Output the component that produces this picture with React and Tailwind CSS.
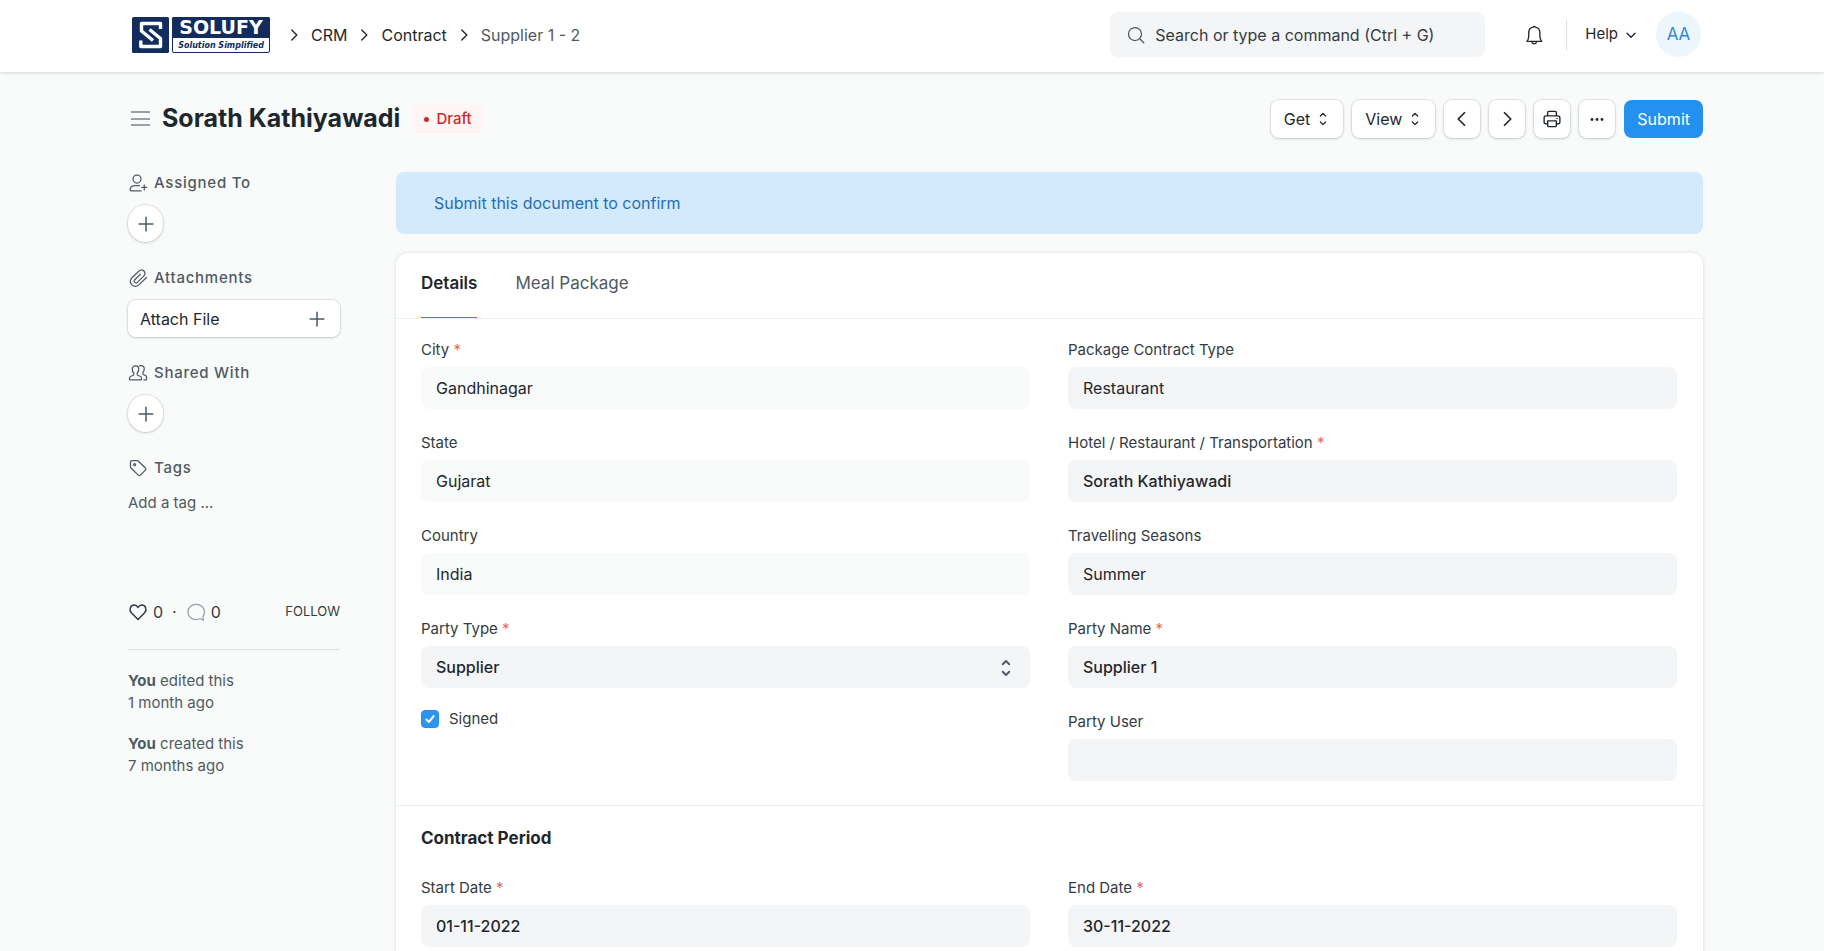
import React, { useState } from "react";

const cardShadow = "shadow-[0_0_4px_rgba(25,39,52,0.12),0_1px_2px_rgba(25,39,52,0.08)]";
const btnShadow = "shadow-[0_0_1px_1px_rgba(25,39,52,0.1),0_1px_3px_rgba(25,39,52,0.14)]";

function Icon({ size = 20, color = "currentColor", width = 1, className = "", children }) {
  return (
    <svg
      width={size}
      height={size}
      viewBox="0 0 16 16"
      fill="none"
      stroke={color}
      strokeWidth={width}
      strokeLinecap="round"
      strokeLinejoin="round"
      className={`shrink-0 ${className}`}
      aria-hidden="true"
    >
      {children}
    </svg>
  );
}

const ChevronRight = (props) => (
  <Icon {...props}>
    <path d="M6 3.5 10.5 8 6 12.5" />
  </Icon>
);

const SelectIcon = (props) => (
  <Icon {...props}>
    <path d="M5.400 5 8 2.400 10.600 5M5.400 11 8 13.600 10.600 11" />
  </Icon>
);

const PlusIcon = (props) => (
  <Icon {...props}>
    <path d="M8 2.5v11M2.5 8h11" />
  </Icon>
);

function Logo() {
  return (
    <svg width="138" height="36" viewBox="0 0 138 36" aria-label="Solufy">
      <rect width="37" height="36" rx="1.5" fill="#122c5e" />
      <path
        d="M28.5 12V6.5H9.5V14L21 23.5M8.8 23.500V29.500H28.500V21.500L17.500 12.500"
        fill="none"
        stroke="#fff"
        strokeWidth="3.4"
        strokeLinejoin="round"
      />
      <rect x="40.5" y="0.5" width="97" height="35" rx="1.5" fill="#fff" stroke="#122c5e" />
      <path d="M40 1.5A1.5 1.5 0 0 1 41.500 0H136.500A1.500 1.500 0 0 1 138 1.500V21H40Z" fill="#122c5e" />
      <text
        x="89"
        y="17"
        textAnchor="middle"
        fill="#fff"
        fontFamily="DejaVu Sans, sans-serif"
        fontSize="19"
        fontWeight="700"
      >
        SOLUFY
      </text>
      <text
        x="89"
        y="31"
        textAnchor="middle"
        fill="#122c5e"
        fontFamily="DejaVu Sans, sans-serif"
        fontSize="8"
        fontWeight="700"
        fontStyle="italic"
      >
        Solution Simplified
      </text>
    </svg>
  );
}

function Navbar() {
  return (
    <header className="bg-white shadow-[0_1px_3px_rgba(25,39,52,0.18)]">
      <div className="mx-auto flex h-[72px] max-w-[1600px] items-center pl-5 pr-[11px] pb-[3px]">
        <a href="#home">
          <Logo />
        </a>
        <nav className="ml-[15px] flex items-center gap-2 text-base">
          <ChevronRight size={18} width={1.2} />
          <a href="#crm">CRM</a>
          <ChevronRight size={18} width={1.2} />
          <a href="#contract">Contract</a>
          <ChevronRight size={18} width={1.2} />
          <a href="#supplier" className="text-[#505a62]">
            Supplier 1 - 2
          </a>
        </nav>
        <div className="ml-auto flex h-[45px] w-[375px] items-center rounded-lg bg-[#f4f5f6] pl-4">
          <Icon size={20} color="#4c5a67">
            <circle cx="7.2" cy="7.2" r="5.2" />
            <path d="m11.2 11.2 3 3" />
          </Icon>
          <input
            aria-label="Search"
            placeholder="Search or type a command (Ctrl + G)"
            className="ml-[9px] min-w-0 flex-1 bg-transparent text-base outline-none placeholder:text-[#333c44]"
          />
        </div>
        <button aria-label="Notifications" className="ml-[37px]">
          <Icon size={24} width={0.9}>
            <path d="M3.300 12.200h9.900c-.8-1-1.300-1.900-1.300-3.600V6.400A3.700 3.700 0 0 0 8.900 2.800a.8.800 0 0 0-1.500 0A3.700 3.700 0 0 0 4.500 6.400v2.200c0 1.700-.4 2.600-1.200 3.600ZM6.500 12.400c.2.900.8 1.400 1.600 1.400s1.500-.5 1.700-1.400" />
          </Icon>
        </button>
        <div className="ml-5 h-[30px] w-px bg-[#dce0e3]" />
        <button className="ml-[18px] flex items-center gap-[5px] text-[15px]">
          Help
          <Icon size={16} width={1.4}>
            <path d="M4 6.200 8 10.200l4-4" />
          </Icon>
        </button>
        <div className="ml-[17px] flex size-[45px] items-center justify-center rounded-full bg-[#edf6fd] text-[17px] text-[#318ad8]">
          AA
        </div>
      </div>
    </header>
  );
}

function ToolButton({ label, children }) {
  return (
    <button
      aria-label={label}
      className={`flex h-[38px] min-w-9 items-center justify-center gap-[5px] rounded-lg bg-white text-base ${btnShadow}`}
    >
      {children}
    </button>
  );
}

function PageHead() {
  return (
    <div className="flex h-[38px] items-center">
      <button aria-label="Toggle sidebar">
        <svg width="24" height="24" viewBox="0 0 24 24" stroke="#98a1a9" strokeWidth="2" aria-hidden="true">
          <path d="M3 5h19M3 12h19M3 18h19" />
        </svg>
      </button>
      <h1 className="ml-[10px] pb-[2px] text-[25px] font-bold leading-8">Sorath Kathiyawadi</h1>
      <span className="ml-3 flex h-[30px] items-center gap-[7px] rounded-lg bg-[#fff5f5] px-3 text-[15px] font-medium text-[#cb2929]">
        <i className="size-[5px] rounded-full bg-[#cb2929]" />
        Draft
      </span>
      <div className="ml-auto flex items-center gap-[9px]">
        <ToolButton>
          <span className="pl-[13px]">Get</span>
          <SelectIcon size={16} width={1.3} className="mr-3" />
        </ToolButton>
        <ToolButton>
          <span className="pl-[13px]">View</span>
          <SelectIcon size={16} width={1.3} className="mr-3" />
        </ToolButton>
        <ToolButton label="Previous">
          <Icon size={20} width={1.4}>
            <path d="M10 3 5 8l5 5" />
          </Icon>
        </ToolButton>
        <ToolButton label="Next">
          <Icon size={20} width={1.4}>
            <path d="m6 3 5 5-5 5" />
          </Icon>
        </ToolButton>
        <ToolButton label="Print">
          <Icon size={20} width={1.1}>
            <path d="M4.500 5.500V2.800c0-.6.300-.9.900-.9h5.200c.6 0 .9.300.9.900v2.700M4.500 11.800H3a1.300 1.300 0 0 1-1.300-1.300V7A1.500 1.500 0 0 1 3.200 5.500h9.600A1.500 1.500 0 0 1 14.300 7v3.500a1.300 1.300 0 0 1-1.300 1.300h-1.500" />
            <path d="M4.500 9.500h7v3.700a.9.900 0 0 1-.9.900H5.400a.9.900 0 0 1-.9-.9Z" />
            <path d="M12 7.500h.1" />
          </Icon>
        </ToolButton>
        <ToolButton label="Menu">
          <svg width="16" height="16" viewBox="0 0 16 16" fill="currentColor" aria-hidden="true">
            <circle cx="3" cy="8.5" r="1.4" />
            <circle cx="8" cy="8.5" r="1.4" />
            <circle cx="13" cy="8.5" r="1.4" />
          </svg>
        </ToolButton>
        <button className="h-[38px] rounded-lg bg-[#2490ef] px-[13px] text-base text-white">Submit</button>
      </div>
    </div>
  );
}

function SideLabel({ icon, children }) {
  return (
    <div className="flex h-[22px] items-center gap-[6px] text-[15px] font-medium tracking-wider text-[#505a62]">
      {icon}
      {children}
    </div>
  );
}

function RoundAdd({ label }) {
  return (
    <button
      aria-label={label}
      className={`mt-[11px] flex h-[37px] w-[35px] items-center justify-center rounded-full bg-white text-[#4c5a67] ${btnShadow}`}
    >
      <PlusIcon size={20} width={1.2} />
    </button>
  );
}

function Sidebar() {
  return (
    <aside className="w-[212px] shrink-0 text-[15px] text-[#505a62]">
      <SideLabel
        icon={
          <Icon>
            <circle cx="7.2" cy="4.8" r="3.2" />
            <path d="M9.200 10H5.500C3.200 10 1.700 11.500 1.700 13.300c0 .6.300.9.900.9h7.900M13 9.500v4M11 11.500h4" />
          </Icon>
        }
      >
        Assigned To
      </SideLabel>
      <RoundAdd label="Assign" />
      <div className="h-[25px]" />
      <SideLabel
        icon={
          <Icon>
            <path d="m14.800 7.600-5.700 5.500c-2 1.900-4.400 2-6 .4s-1.600-4 .3-5.900l5-4.800c1.500-1.500 3.200-1.500 4.300-.4 1.200 1.200 1.200 2.900-.3 4.300l-4.700 4.600c-.8.800-1.700.8-2.300.2-.6-.6-.6-1.500.2-2.300L9.900 5" />
          </Icon>
        }
      >
        Attachments
      </SideLabel>
      <button
        className={`mt-[11px] flex h-[37px] w-full items-center justify-between rounded-lg bg-white pl-3 pr-[13px] text-base text-[#1f272e] ${btnShadow}`}
      >
        Attach File
        <PlusIcon size={20} width={1.2} color="#4c5a67" />
      </button>
      <div className="h-[25px]" />
      <SideLabel
        icon={
          <Icon>
            <path d="M6 2.300c1.700 0 2.600 1.200 2.600 2.700 0 1.300-.5 2.300-1.200 3v1.100c0 .5.200.7.700.9l1.600.6c.7.300 1.100.8 1.100 1.600v.7c0 .3-.2.500-.5.500H1.700c-.3 0-.5-.2-.5-.5v-.7c0-.8.400-1.300 1.100-1.600l1.600-.6c.5-.2.700-.4.700-.9V8c-.7-.7-1.200-1.700-1.200-3C3.400 3.500 4.300 2.300 6 2.300ZM9.300 2.300c.4-.2.800-.3 1.200-.3 1.600 0 2.500 1.200 2.500 2.700 0 1.200-.4 2.200-1.100 2.900v.9c0 .5.200.7.700.9l1.200.5c.7.300 1.100.8 1.100 1.600v1.400c0 .3-.2.500-.5.500h-1.700" />
          </Icon>
        }
      >
        Shared With
      </SideLabel>
      <RoundAdd label="Share" />
      <div className="h-[25px]" />
      <SideLabel
        icon={
          <Icon>
            <path d="M2 3v4c0 .4.100.7.400 1l5.800 5.700c.5.500 1.200.5 1.700 0l4-4c.5-.5.500-1.200 0-1.700L8.100 2.400c-.3-.3-.6-.4-1-.4H3a1 1 0 0 0-1 1Z" />
            <circle cx="5.3" cy="5.3" r=".8" />
          </Icon>
        }
      >
        Tags
      </SideLabel>
      <button className="mt-[14px] block h-5 leading-5">Add a tag ...</button>

      <div className="mt-[87px] flex h-6 items-center text-base text-[#333c44]">
        <button className="flex items-center gap-[5px]">
          <Icon size={20} width={1.2}>
            <path d="M8 14 2.700 8.600C.5 6 2 2.400 4.900 2.400c1.400 0 2.400.7 3.100 1.900.7-1.200 1.700-1.900 3.100-1.900 2.900 0 4.400 3.600 2.200 6.200Z" />
          </Icon>
          0
        </button>
        <span className="mx-[9px]">·</span>
        <button className="flex items-center gap-[5px]">
          <Icon size={20} color="#98a1a9">
            <path d="M14 14.600 11.300 13.400c-1 .4-2 .6-3.100.6C4.500 14 1.500 11.600 1.500 8s3-6.200 6.700-6.200S14.800 4.400 14.800 8c0 1.400-.5 2.600-1.300 3.600Z" />
          </Icon>
          0
        </button>
        <button className="ml-auto text-[13px]">FOLLOW</button>
      </div>
      <hr className="mt-[25px] border-[#dce0e3]" />
      <p className="mt-5 leading-[22px]">
        <b>You</b> edited this
        <br />1 month ago
      </p>
      <p className="mt-[19px] leading-[22px]">
        <b>You</b> created this
        <br />7 months ago
      </p>
    </aside>
  );
}

function FieldLabel({ id, label, required }) {
  return (
    <label htmlFor={id} className="block h-5 text-[15px] leading-5 text-[#333c44]">
      {label}
      {required && <span className="text-[#e8695c]"> *</span>}
    </label>
  );
}

function Field({ id, label, value = "", required, readOnly, bold }) {
  const [text, setText] = useState(value);
  return (
    <div className="mb-6">
      <FieldLabel id={id} label={label} required={required} />
      <input
        id={id}
        value={text}
        readOnly={readOnly}
        onChange={(e) => setText(e.target.value)}
        className={`mt-[7px] block h-[42px] w-full rounded-lg px-[15px] text-base text-[#1f272e] outline-none ${
          readOnly ? "bg-[#f9fafa]" : "bg-[#f4f5f6]"
        } ${bold ? "font-medium" : ""}`}
      />
    </div>
  );
}

function ContractForm() {
  const [signed, setSigned] = useState(true);

  return (
    <section className={`mt-[19px] rounded-xl bg-white ${cardShadow}`}>
      <div className="flex h-[66px] gap-[38px] border-b border-[#ebeef0] px-[25px] text-[17px]">
        <button className="border-b border-[#2490ef] pb-[3px] font-semibold">Details</button>
        <button className="pb-1 text-[#505a62]">Meal Package</button>
      </div>
      <div className="grid grid-cols-2 gap-x-[38px] border-b border-[#ebeef0] pl-[25px] pr-[26px] pt-[21px]">
        <div>
          <Field id="city" label="City" value="Gandhinagar" required readOnly />
          <Field id="state" label="State" value="Gujarat" readOnly />
          <Field id="country" label="Country" value="India" readOnly />
          <FieldLabel id="party-type" label="Party Type" required />
          <div className="relative mt-[7px]">
            <select
              id="party-type"
              className="block h-[42px] w-full appearance-none rounded-lg bg-[#f4f5f6] px-[15px] text-base font-medium outline-none"
            >
              <option>Supplier</option>
            </select>
            <SelectIcon
              size={20}
              width={1.5}
              color="#4c5a67"
              className="pointer-events-none absolute right-[14px] top-3"
            />
          </div>
          <label className="mt-5 flex items-center gap-[10px] text-[15px] text-[#333c44]">
            <span className="relative flex">
              <input
                type="checkbox"
                checked={signed}
                onChange={(e) => setSigned(e.target.checked)}
                className="size-[18px] appearance-none rounded border border-[#c0c6cc] checked:border-[#2490ef] checked:bg-[#2d95f0]"
              />
              {signed && (
                <Icon size={18} width={1.8} color="#fff" className="pointer-events-none absolute left-0 top-0">
                  <path d="m4.800 8.500 2.200 2.200 4.200-5.200" />
                </Icon>
              )}
            </span>
            Signed
          </label>
        </div>
        <div>
          <Field id="contract-type" label="Package Contract Type" value="Restaurant" />
          <Field id="hotel" label="Hotel / Restaurant / Transportation" value="Sorath Kathiyawadi" required bold />
          <Field id="seasons" label="Travelling Seasons" value="Summer" />
          <Field id="party-name" label="Party Name" value="Supplier 1" required bold />
          <Field id="party-user" label="Party User" />
        </div>
      </div>
      <div className="pl-[25px] pr-[26px] pt-5">
        <h2 className="text-[17px] font-bold leading-6">Contract Period</h2>
        <div className="mt-7 grid grid-cols-2 gap-x-[38px]">
          <Field id="start-date" label="Start Date" value="01-11-2022" required bold />
          <Field id="end-date" label="End Date" value="30-11-2022" required bold />
        </div>
      </div>
    </section>
  );
}

function App() {
  return (
    <div className="min-h-screen bg-[#f9fafa] font-[Inter,sans-serif] text-[#1f272e]">
      <Navbar />
      <div className="mx-auto max-w-[1600px] pl-4 pr-[9px] pt-7">
        <PageHead />
        <div className="mt-[34px] flex gap-14">
          <Sidebar />
          <main className="min-w-0 flex-1">
            <div className="flex h-[62px] items-center rounded-lg bg-[#d3e9fc] px-[38px] text-base text-[#1f6fb5]">
              Submit this document to confirm
            </div>
            <ContractForm />
          </main>
        </div>
      </div>
    </div>
  );
}

export default App;
